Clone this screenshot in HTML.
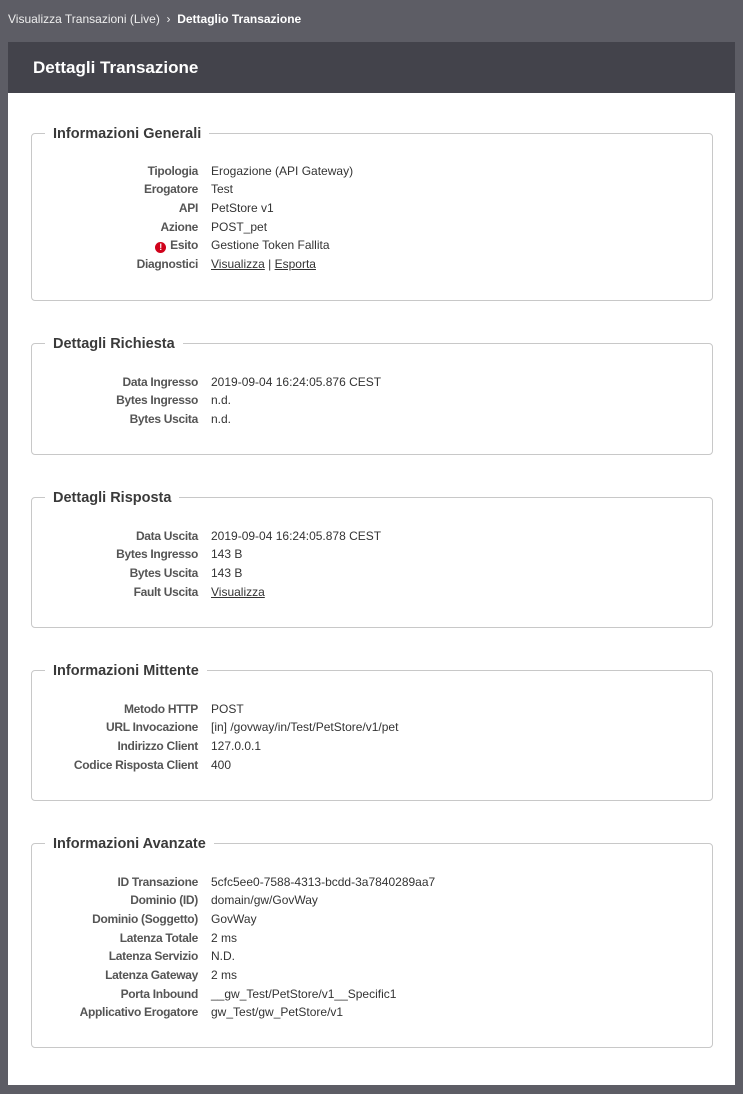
<!DOCTYPE html>
<html><head><meta charset="utf-8"><style>
*{margin:0;padding:0;box-sizing:border-box}
body{width:743px;height:1094px;background:#5d5d65;font-family:"Liberation Sans",Arial,sans-serif;position:relative;overflow:hidden}
.bc{position:absolute;left:8px;top:12px;font-size:12px;color:#eee}
.bc b{color:#fff}
.page{position:absolute;left:8px;top:42px;width:727px;height:1043px;background:#fff}
.hd{height:51px;background:#43434b;color:#fff;font-weight:bold;font-size:17px;padding:16px 0 0 25px}
.fs{position:absolute;left:23px;width:682px;border:1px solid #c8c8c8;border-radius:4px}
.lg{position:absolute;left:13px;top:-8px;background:#fff;padding:0 8px;font-size:14.5px;font-weight:bold;color:#3a3a3a}
.row{position:absolute;left:0;font-size:12px;line-height:14px;white-space:nowrap}
.row .l{position:absolute;right:-166px;width:200px;text-align:right;font-weight:bold;color:#555;letter-spacing:-0.3px}
.row .v{position:absolute;left:179px;color:#333}
u{text-decoration:underline}
.ex{display:inline-block;width:11px;height:11px;border-radius:50%;background:#d0021b;color:#fff;font-size:9px;text-align:center;line-height:11px;vertical-align:-1px;margin-right:4px}
</style></head><body>
<div class="bc">Visualizza Transazioni (Live) &nbsp;›&nbsp; <b>Dettaglio Transazione</b></div>
<div class="page"><div class="hd">Dettagli Transazione</div></div>
<div id="c"></div>
<script>
const S=[
[133,301,"Informazioni Generali",170,[["Tipologia","Erogazione (API Gateway)"],["Erogatore","Test"],["API","PetStore v1"],["Azione","POST_pet"],["<span class='ex'>!</span>Esito","Gestione Token Fallita"],["Diagnostici","<u>Visualizza</u> | <u>Esporta</u>"]]],
[343,455,"Dettagli Richiesta",381,[["Data Ingresso","2019-09-04 16:24:05.876 CEST"],["Bytes Ingresso","n.d."],["Bytes Uscita","n.d."]]],
[497,628,"Dettagli Risposta",535,[["Data Uscita","2019-09-04 16:24:05.878 CEST"],["Bytes Ingresso","143 B"],["Bytes Uscita","143 B"],["Fault Uscita","<u>Visualizza</u>"]]],
[670,801,"Informazioni Mittente",708,[["Metodo HTTP","POST"],["URL Invocazione","[in] /govway/in/Test/PetStore/v1/pet"],["Indirizzo Client","127.0.0.1"],["Codice Risposta Client","400"]]],
[843,1048,"Informazioni Avanzate",881,[["ID Transazione","5cfc5ee0-7588-4313-bcdd-3a7840289aa7"],["Dominio (ID)","domain/gw/GovWay"],["Dominio (Soggetto)","GovWay"],["Latenza Totale","2 ms"],["Latenza Servizio","N.D."],["Latenza Gateway","2 ms"],["Porta Inbound","__gw_Test/PetStore/v1__Specific1"],["Applicativo Erogatore","gw_Test/gw_PetStore/v1"]]]];
let h="";
for(const [t,b,n,r0,rows] of S){
 h+=`<div class="fs" style="left:31px;top:${t}px;height:${b-t}px"><div class="lg">${n}</div>`;
 rows.forEach((r,i)=>{h+=`<div class="row" style="top:${r0-t-7.5+i*18.7}px"><span class="l">${r[0]}</span><span class="v">${r[1]}</span></div>`});
 h+="</div>";
}
document.getElementById("c").innerHTML=h;
</script>
</body></html>
